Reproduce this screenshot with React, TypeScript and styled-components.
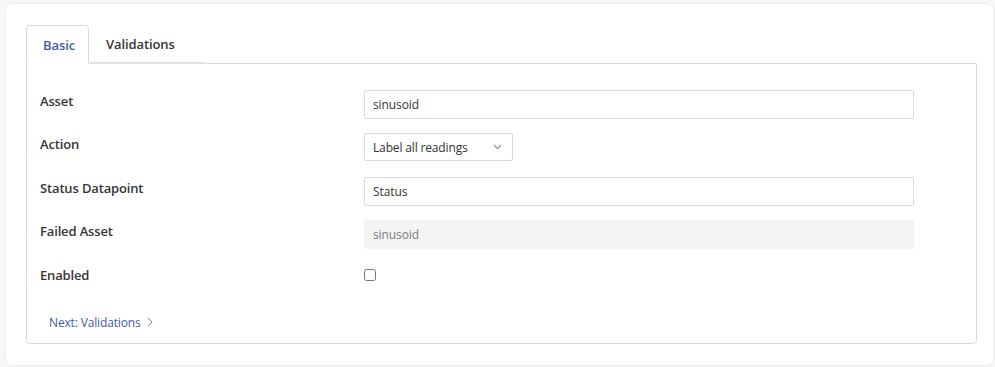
import React, { useState } from "react"
import styled, { createGlobalStyle } from "styled-components"

const GlobalStyle = createGlobalStyle`
  html, body {
    margin: 0;
    background: #f7f7f7;
    font-family: "Open Sans", "Noto Sans", sans-serif;
  }
`

const Page = styled.div`
  padding: 4px 2px 2px 6px;
`

const Card = styled.div`
  display: flex;
  flex-direction: column;

  height: 361px;
  box-sizing: border-box;

  padding: 21px 16px 21px 20px;

  background: #fff;
  border-radius: 6px;
  box-shadow: 0 0 3px rgba(0, 0, 0, 0.08);
`

const TabList = styled.div`
  display: flex;
  align-items: flex-end;
`

const Tab = styled.button<{ $active?: boolean; $width: number }>`
  width: ${({ $width }) => $width}px;
  height: 39px;
  box-sizing: border-box;
  padding: 0 0 0 16px;
  margin-bottom: -1px;

  font-family: inherit;
  font-size: 13px;
  font-weight: 600;
  text-align: left;
  letter-spacing: -0.1px;

  color: ${({ $active }) => ($active ? "#3e5ca6" : "#363636")};
  background: #fff;

  border: 1px solid ${({ $active }) => ($active ? "#dcdcdc" : "transparent")};
  border-bottom: ${({ $active }) => ($active ? "1px solid #fff" : "2px solid #e2e2e2")};
  border-radius: 4px 4px 0 0;

  cursor: pointer;
  position: relative;
  z-index: ${({ $active }) => ($active ? 1 : 0)};
`

const Panel = styled.div`
  flex: 1;
  display: flex;
  flex-direction: column;

  padding: 26px 13px 0 13px;

  border: 1px solid #dcdcdc;
  border-radius: 0 0 4px 4px;
`

const Row = styled.div`
  display: flex;
  align-items: flex-start;

  height: 43.4px;
`

const Label = styled.label`
  width: 324px;
  flex-shrink: 0;

  font-size: 13px;
  font-weight: 600;
  line-height: 22px;
  letter-spacing: -0.15px;

  color: #363636;
`

const Input = styled.input`
  width: 550px;
  height: 29px;
  box-sizing: border-box;
  padding: 0 8px;

  font-family: inherit;
  font-size: 12px;
  letter-spacing: -0.1px;
  color: #333;

  border: 1px solid #dbdbdb;
  border-radius: 2px;
  outline: none;

  &:disabled {
    background: #f4f4f4;
    border-color: #f4f4f4;
    color: #7a7a7a;
  }
`

const SelectBox = styled.div`
  display: flex;
  align-items: center;
  justify-content: space-between;

  width: 149px;
  height: 28px;
  box-sizing: border-box;
  padding: 0 10px 0 8px;

  font-size: 12px;
  letter-spacing: -0.15px;
  color: #333;

  border: 1px solid #dbdbdb;
  border-radius: 2px;
`

const Checkbox = styled.input`
  width: 12px;
  height: 12px;
  margin: 5px 0 0;
`

const NextLink = styled.a`
  display: flex;
  align-items: center;
  gap: 6px;

  margin: 7px 0 0 9px;

  font-size: 12px;
  letter-spacing: -0.15px;
  color: #3e5ca6;
  text-decoration: none;
  cursor: pointer;
`

const Chevron = ({ dir }: { dir: "down" | "right" }) =>
  dir === "down" ? (
    <svg width="9" height="6" viewBox="0 0 9 6">
      <path d="M1 1l3.5 3.5L8 1" fill="none" stroke="#9a9a9a" strokeWidth="1.3" />
    </svg>
  ) : (
    <svg width="6" height="10" viewBox="0 0 6 10">
      <path d="M1 1l4 4-4 4" fill="none" stroke="#7b8bb0" strokeWidth="1" />
    </svg>
  )

const App = () => {
  const [tab, setTab] = useState("basic")
  const [enabled, setEnabled] = useState(false)

  return (
    <Page>
      <GlobalStyle />
      <Card>
        <TabList>
          <Tab $width={63} $active={tab === "basic"} onClick={() => setTab("basic")}>Basic</Tab>
          <Tab $width={118} $active={tab === "validations"} onClick={() => setTab("validations")}>Validations</Tab>
        </TabList>
        <Panel>
          <Row>
            <Label>Asset</Label>
            <Input defaultValue="sinusoid" />
          </Row>
          <Row>
            <Label>Action</Label>
            <SelectBox>
              <span>Label all readings</span>
              <Chevron dir="down" />
            </SelectBox>
          </Row>
          <Row>
            <Label>Status Datapoint</Label>
            <Input defaultValue="Status" />
          </Row>
          <Row>
            <Label>Failed Asset</Label>
            <Input defaultValue="sinusoid" disabled />
          </Row>
          <Row>
            <Label>Enabled</Label>
            <Checkbox type="checkbox" checked={enabled} onChange={() => setEnabled(!enabled)} />
          </Row>
          <NextLink onClick={() => setTab("validations")}>
            Next: Validations <Chevron dir="right" />
          </NextLink>
        </Panel>
      </Card>
    </Page>
  )
}

export default App
